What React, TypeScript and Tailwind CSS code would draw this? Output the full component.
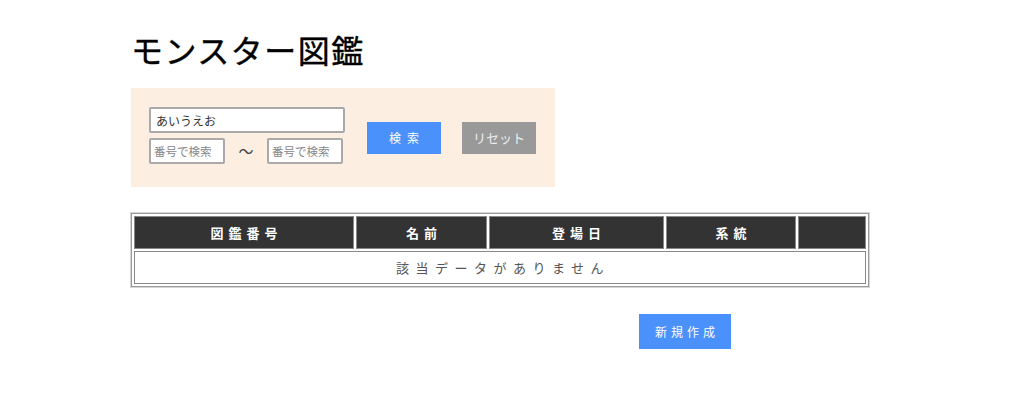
export default function App() {
  return (
    <div
      className="min-h-[416px] w-[1024px] bg-white pl-[131px] pt-[29px] text-[#222]"
      style={{ fontFamily: '"Noto Sans CJK JP", "Noto Sans", sans-serif' }}
    >
      {/* title */}
      <h1 className="text-[32px] leading-[40px] font-normal tracking-[1.5px] text-black [-webkit-text-stroke:0.4px_black]">
        モンスター図鑑
      </h1>

      {/* search panel */}
      <div className="mt-[19px] flex h-[99px] w-[424px] items-center bg-[#fcefe2] pl-[18px] pb-[4px]">
        <div className="flex flex-col gap-[5px]">
          <input
            defaultValue="あいうえお"
            className="h-[26px] w-[196px] rounded-[2px] border-2 border-[#a9a9a9] bg-white px-[5px] text-[12px] text-[#333] outline-none"
          />
          <div className="flex items-center">
            <input
              placeholder="番号で検索"
              className="h-[26px] w-[76px] rounded-[2px] border-2 border-[#a9a9a9] bg-white px-[3px] text-[11.5px] outline-none placeholder:text-[#888]"
            />
            <span className="w-[42px] text-center text-[15px] text-[#444]">〜</span>
            <input
              placeholder="番号で検索"
              className="h-[26px] w-[76px] rounded-[2px] border-2 border-[#a9a9a9] bg-white px-[3px] text-[11.5px] outline-none placeholder:text-[#888]"
            />
          </div>
        </div>
        <button className="ml-[22px] mt-[4px] h-[32px] w-[74px] bg-[#4a91fb] pl-[6px] text-[12px] tracking-[6px] text-white">
          検索
        </button>
        <button className="ml-[21px] mt-[4px] h-[32px] w-[74px] bg-[#999999] text-[13px] text-[#eee]">
          リセット
        </button>
      </div>

      {/* table */}
      <table className="mt-[26px] w-[738px] border-separate border-spacing-[2px] border border-[#9a9a9a] text-[13px] outline outline-1 outline-[#d4d4d4]">
        <thead>
          <tr className="h-[33px]">
            <th className="w-[220px] border border-[#888] bg-[#333] pl-[5px] font-bold tracking-[5px] text-white">図鑑番号</th>
            <th className="w-[131px] border border-[#888] bg-[#333] pl-[5px] font-bold tracking-[5px] text-white">名前</th>
            <th className="w-[175px] border border-[#888] bg-[#333] pl-[5px] font-bold tracking-[5px] text-white">登場日</th>
            <th className="w-[130px] border border-[#888] bg-[#333] pl-[5px] font-bold tracking-[5px] text-white">系統</th>
            <th className="border border-[#888] bg-[#333]"></th>
          </tr>
        </thead>
        <tbody>
          <tr className="h-[33px]">
            <td colSpan={5} className="border border-[#888] pl-[6px] text-center text-[13px] tracking-[6.5px] text-[#555]">
              該当データがありません
            </td>
          </tr>
        </tbody>
      </table>

      {/* new button */}
      <button className="ml-[508px] mt-[27px] h-[35px] w-[92px] bg-[#4a91fb] pl-[4px] text-[12px] tracking-[4px] text-white">
        新規作成
      </button>
    </div>
  );
}
